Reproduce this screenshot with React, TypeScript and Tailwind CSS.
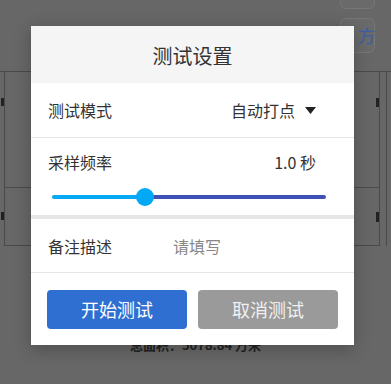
import React from "react";

const font = { fontFamily: '"Noto Sans CJK SC", "Noto Sans", sans-serif' };

function Background() {
  return (
    <div className="w-[391px] h-[384px] bg-[#676767] flex flex-col overflow-hidden">
      <div className="flex flex-col items-end pr-[16px] gap-[9px] mt-[-26px]">
        <div className="w-[35px] h-[35px] rounded-[6px] border border-[#767676] bg-[#6a6a6a]" />
        <div className="w-[35px] h-[35px] rounded-[6px] border border-[#767676] bg-[#6a6a6a] flex items-center justify-center text-[18px] text-[#3d5fa8]" style={font}>
          <span className="text-[#a0703a]">·</span>方
        </div>
      </div>
      <div className="mt-[18px] border-t border-[#4a4a4a] flex">
        <div className="w-[5px] border-r border-[#4a4a4a]" />
        <div className="flex-1 flex flex-col">
          <div className="h-[116px] border-b border-[#4a4a4a] flex items-start justify-between pt-[26px]">
            <div className="w-[3px] h-[8px] bg-[#222] ml-[-4px]" />
            <div className="w-[3px] h-[9px] bg-[#222]" />
          </div>
          <div className="h-[58px] border-b border-[#4a4a4a] flex items-start justify-between pt-[24px]">
            <div className="w-[3px] h-[8px] bg-[#222] ml-[-4px]" />
            <div className="w-[3px] h-[10px] bg-[#222]" />
          </div>
        </div>
        <div className="w-[8px] border-l border-r border-[#4a4a4a] mr-[4px]" />
      </div>
      <div className="mt-[89px] flex justify-center text-[13px] text-[#222] font-bold" style={font}>
        总面积：5078.84 万米
      </div>
    </div>
  );
}

function Modal() {
  return (
    <div className="absolute left-[31px] top-[26px] w-[323px] bg-white shadow-[0_4px_16px_rgba(0,0,0,0.25)] text-[#333]" style={font}>
      <div className="h-[57px] bg-[#f5f5f5] flex items-center justify-center pt-[2px] text-[20px] text-[#333]">
        测试设置
      </div>
      <div className="h-[54px] flex items-center justify-between pl-[17px] pr-[38px] text-[16px]">
        <span>测试模式</span>
        <span className="flex items-center gap-[10px]">
          自动打点
          <svg width="11" height="7" viewBox="0 0 11 7"><path d="M0 0 L11 0 L5.5 7 Z" fill="#222" /></svg>
        </span>
      </div>
      <div className="h-px bg-[#e5e5e5]" />
      <div className="h-[77px] flex flex-col pl-[17px] pr-[38px] pt-[12px]">
        <div className="flex justify-between text-[16px] leading-[24px]">
          <span>采样频率</span>
          <span>1.0 秒</span>
        </div>
        <div className="mt-[21px] ml-[4px] mr-[-10px] relative h-[4px] flex">
          <div className="w-[34%] h-full bg-[#03a9f4] rounded-l-full" />
          <div className="flex-1 h-full bg-[#3f51b5] rounded-r-full" />
          <div className="absolute left-[34%] top-1/2 -translate-x-1/2 -translate-y-1/2 w-[18px] h-[18px] rounded-full bg-[#03a9f4]" />
        </div>
      </div>
      <div className="h-[4px] bg-[#e6e6e6]" />
      <div className="h-[53px] flex items-center pl-[17px] text-[16px]">
        <span className="w-[125px]">备注描述</span>
        <span className="text-[#888]">请填写</span>
      </div>
      <div className="h-px bg-[#e5e5e5]" />
      <div className="h-[72px] flex items-center gap-[11px] px-[16px]">
        <button className="flex-1 h-[39px] rounded-[4px] bg-[#2f6fd1] text-white text-[18px]">开始测试</button>
        <button className="flex-1 h-[39px] rounded-[4px] bg-[#9a9a9a] text-[#f0f0f0] text-[18px]">取消测试</button>
      </div>
    </div>
  );
}

export default function App() {
  return (
    <div className="relative w-[391px] h-[384px] overflow-hidden">
      <Background />
      <Modal />
    </div>
  );
}
